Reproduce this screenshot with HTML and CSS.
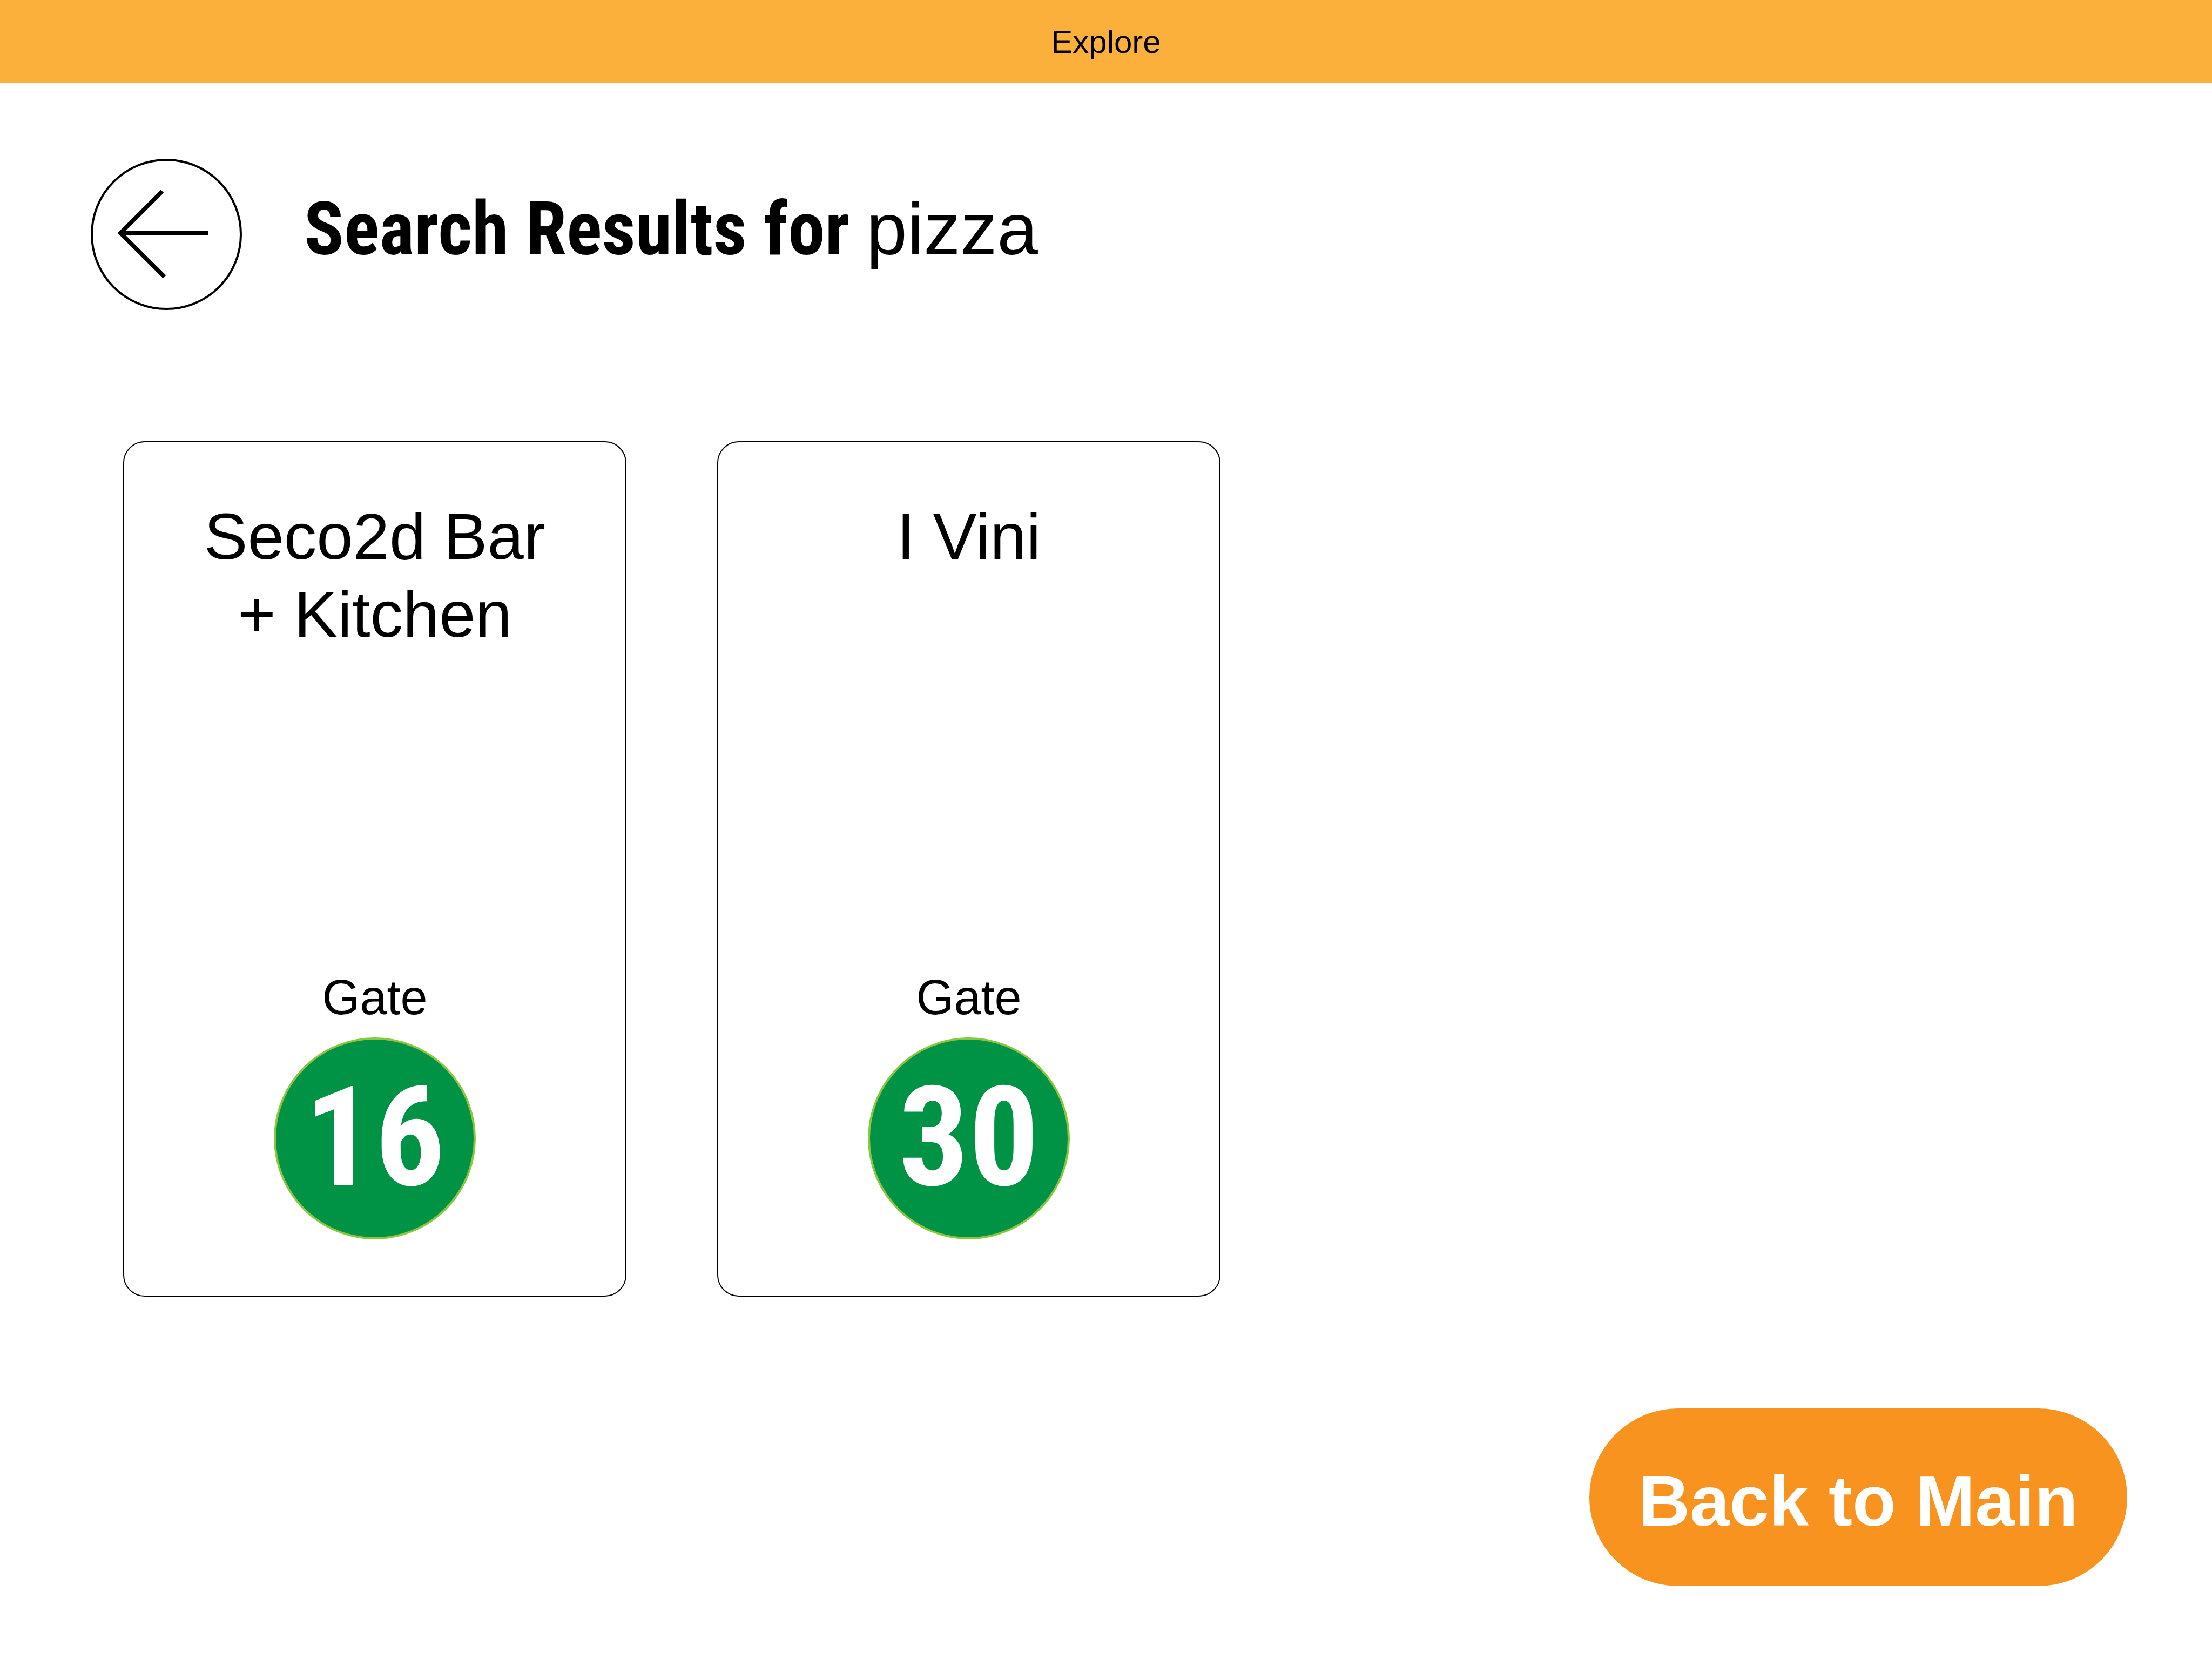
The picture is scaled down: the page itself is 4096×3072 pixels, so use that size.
FILE: index.html
```html
<!DOCTYPE html>
<html lang="en">
<head>
  <meta charset="utf-8">
  <meta name="viewport" content="width=device-width, initial-scale=1">
  <title>Explore</title>
  <link rel="stylesheet" href="styles.css">
</head>
<body>
  <header class="topbar">Explore</header>
  <main class="content">
    <div class="heading">
      <a class="back" href="#search" aria-label="Back">
        <svg class="back-icon" viewBox="0 0 280 280" fill="none" stroke="#000" aria-hidden="true">
          <circle cx="140" cy="140" r="138" stroke-width="4"/>
          <path d="M132.500 60.200L55.200 137.500L136.600 218.600M55 137.300H218" stroke-width="7.800"/>
        </svg>
      </a>
      <h1 class="title"><span class="title-label">Search Results for </span><span>pizza</span></h1>
    </div>
    <ul class="results">
      <li class="card">
        <h2 class="card-name">Seco2d Bar<br>+ Kitchen</h2>
        <div class="gate">
          <span class="gate-label">Gate</span>
          <span class="gate-number">16</span>
        </div>
      </li>
      <li class="card">
        <h2 class="card-name">I Vini</h2>
        <div class="gate">
          <span class="gate-label">Gate</span>
          <span class="gate-number">30</span>
        </div>
      </li>
    </ul>
  </main>
  <footer class="footer">
    <button class="main-button" type="button">Back to Main</button>
  </footer>
</body>
</html>
```
FILE: styles.css
```css
*,
*::before,
*::after {
  box-sizing: border-box;
}

body {
  display: flex;
  flex-direction: column;
  min-height: 100vh;
  margin: 0;
  background: #fff;
  color: #000;
  font-family: "Liberation Sans", Arial, sans-serif;
}

.topbar {
  padding: 42px 0 40px;
  background: #fbb03b;
  font-size: 60px;
  line-height: 72px;
  text-align: center;
}

.content {
  padding: 140px 168px 0;
}

.heading {
  display: flex;
  align-items: center;
  gap: 115px;
}

.back {
  display: block;
  flex: none;
  width: 280px;
  height: 280px;
  border-radius: 50%;
}

.back-icon {
  display: block;
  width: 100%;
  height: 100%;
}

.title {
  margin: 0;
  padding-bottom: 20px;
  font-size: 136px;
  font-weight: 400;
  line-height: 160px;
}

.title-label {
  font-family: "Roboto Condensed", "Arial Narrow", "Liberation Sans", sans-serif;
  font-size: 137px;
  font-weight: 700;
}

.results {
  display: flex;
  flex-wrap: wrap;
  gap: 168px;
  margin: 0;
  padding: 243px 60px 0;
  list-style: none;
}

.card {
  display: flex;
  flex-direction: column;
  justify-content: space-between;
  align-items: center;
  width: 932px;
  min-height: 1584px;
  padding: 102px 60px 104px;
  border: 2px solid #000;
  border-radius: 40px;
  text-align: center;
}

.card-name {
  margin: 0;
  font-size: 121px;
  font-weight: 400;
  line-height: 144px;
}

.gate {
  display: flex;
  flex-direction: column;
  align-items: center;
  gap: 20px;
}

.gate-label {
  font-size: 90px;
  line-height: 108px;
}

.gate-number {
  display: flex;
  justify-content: center;
  align-items: center;
  width: 374px;
  height: 374px;
  padding-bottom: 4px;
  border: 4px solid #8cc63f;
  border-radius: 50%;
  background: #009245;
  color: #fff;
  font-family: "Roboto Condensed", "Arial Narrow", "Liberation Sans", sans-serif;
  font-size: 257px;
  font-weight: 700;
  line-height: 1;
}

.footer {
  display: flex;
  justify-content: flex-end;
  margin-top: auto;
  padding: 0 157px 135px;
}

.main-button {
  padding: 96px 91px 81px;
  border: 0;
  border-radius: 165px;
  background: #f7931e;
  color: #fff;
  font-family: inherit;
  font-size: 132px;
  font-weight: 700;
  line-height: 152px;
}
```
